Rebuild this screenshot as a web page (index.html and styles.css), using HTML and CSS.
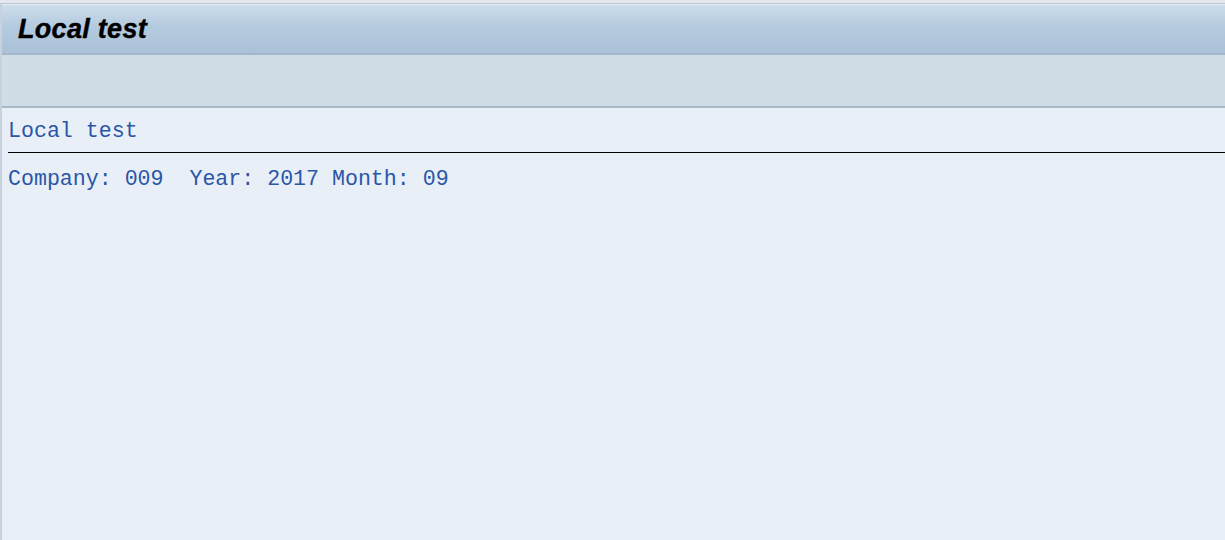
FILE: index.html
```html
<!DOCTYPE html>
<html lang="en">
<head>
    <meta charset="UTF-8">
    <title>Local test</title>
    <link rel="stylesheet" href="styles.css">
</head>
<body>
    <div class="window">
        <div class="title-bar">
            <h1>Local test</h1>
        </div>
        <div class="toolbar"></div>
        <div class="list-output">
            <div class="list-line">Local test</div>
            <hr class="list-rule">
            <div class="list-line">Company: 009  Year: 2017 Month: 09</div>
        </div>
    </div>
</body>
</html>
```

FILE: styles.css
```css
html, body {
    margin: 0;
    padding: 0;
    height: 100%;
}
body {
    background-color: #e4e8ee;
    padding-top: 3px;
    box-sizing: border-box;
    overflow: hidden;
}
.window {
    height: 100%;
    border-left: 2px solid #c8d2de;
    border-top: 1px solid #b9c6d4;
    background-color: #e9eff6;
}
.title-bar {
    height: 48px;
    border-top: 1px solid #e6eef5;
    border-bottom: 2px solid #a3b7ca;
    background: linear-gradient(to bottom, #cddeeb 0%, #b4cadf 45%, #aac1d7 100%);
    display: flex;
    align-items: center;
    padding-left: 16px;
}
.title-bar h1 {
    margin: 0;
    font-family: "Liberation Sans", Arial, sans-serif;
    font-weight: bold;
    font-style: italic;
    font-size: 27px;
    color: #000;
    letter-spacing: 0.3px;
    -webkit-text-stroke: 0.4px #000;
}
.toolbar {
    height: 51px;
    background-color: #d0dde7;
    border-bottom: 2px solid #a8b9c9;
}
.list-output {
    padding: 10px 0 0 6px;
    font-family: "Liberation Mono", "Courier New", monospace;
    font-size: 21.6px;
    color: #2a56a8;
}
.list-line {
    height: 26px;
    line-height: 26px;
    white-space: pre;
}
.list-rule {
    border: none;
    border-top: 1px solid #000;
    margin: 8px 0 13px 0;
}
```
